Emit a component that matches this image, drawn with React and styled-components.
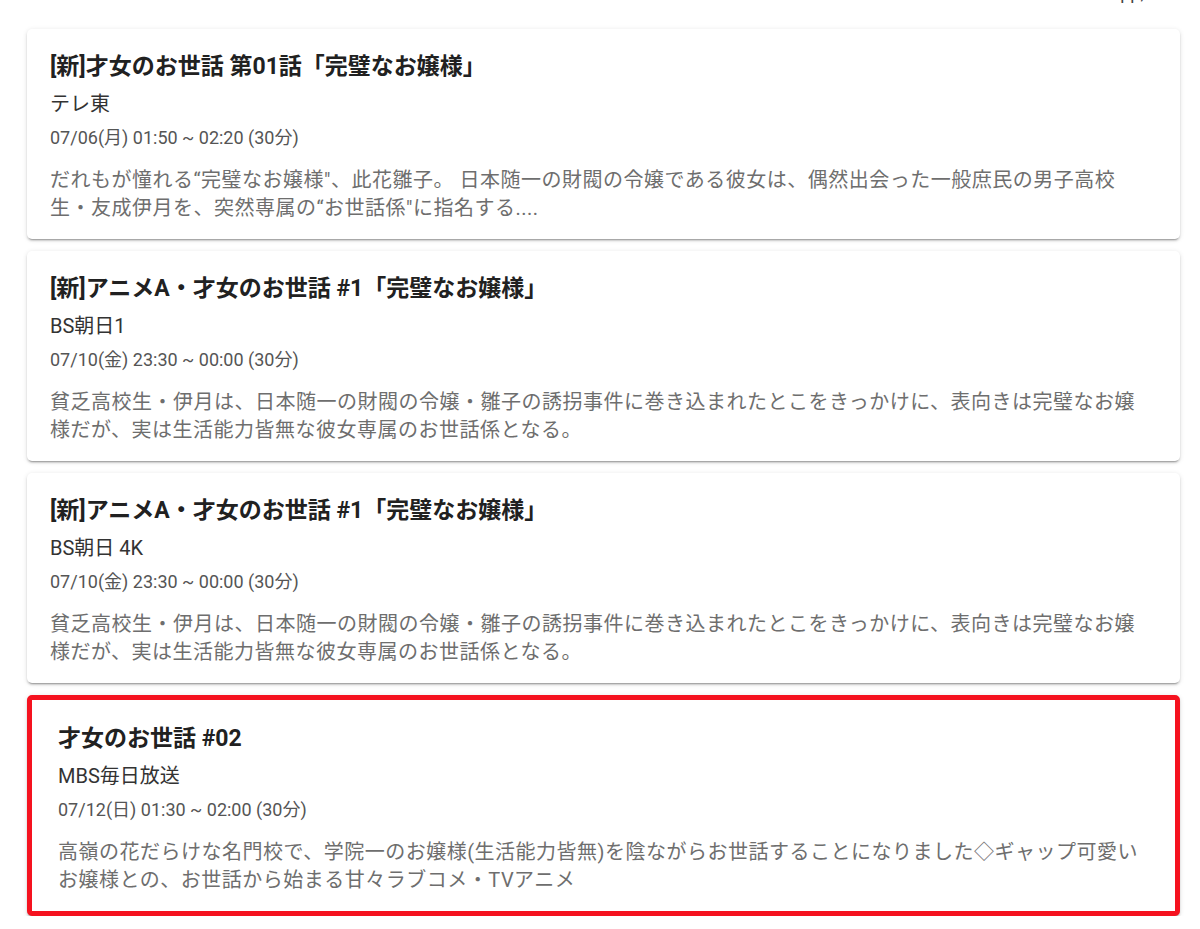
import React from 'react'
import styled, { createGlobalStyle } from 'styled-components'

const GlobalStyle = createGlobalStyle`
  html, body {
    margin: 0;
    background: #ffffff;
    font-family: Roboto, "Noto Sans CJK JP", sans-serif;
    overflow: hidden;
  }
`;

const programs = [
  {
    id: 1,
    title: '[新]才女のお世話 第01話「完璧なお嬢様」',
    station: 'テレ東',
    time: '07/06(月) 01:50 ~ 02:20 (30分)',
    desc: 'だれもが憧れる“完璧なお嬢様"、此花雛子。 日本随一の財閥の令嬢である彼女は、偶然出会った一般庶民の男子高校生・友成伊月を、突然専属の“お世話係"に指名する....',
  },
  {
    id: 2,
    title: '[新]アニメA・才女のお世話 #1「完璧なお嬢様」',
    station: 'BS朝日1',
    time: '07/10(金) 23:30 ~ 00:00 (30分)',
    desc: '貧乏高校生・伊月は、日本随一の財閥の令嬢・雛子の誘拐事件に巻き込まれたとこをきっかけに、表向きは完璧なお嬢様だが、実は生活能力皆無な彼女専属のお世話係となる。',
  },
  {
    id: 3,
    title: '[新]アニメA・才女のお世話 #1「完璧なお嬢様」',
    station: 'BS朝日 4K',
    time: '07/10(金) 23:30 ~ 00:00 (30分)',
    desc: '貧乏高校生・伊月は、日本随一の財閥の令嬢・雛子の誘拐事件に巻き込まれたとこをきっかけに、表向きは完璧なお嬢様だが、実は生活能力皆無な彼女専属のお世話係となる。',
  },
  {
    id: 4,
    title: '才女のお世話 #02',
    station: 'MBS毎日放送',
    time: '07/12(日) 01:30 ~ 02:00 (30分)',
    desc: '高嶺の花だらけな名門校で、学院一のお嬢様(生活能力皆無)を陰ながらお世話することになりました◇ギャップ可愛いお嬢様との、お世話から始まる甘々ラブコメ・TVアニメ',
    selected: true,
  },
];

export default function App() {
  return (
    <>
      <GlobalStyle />
      <Page>
        <Toolbar>
          <ToolLink>app,</ToolLink>
        </Toolbar>
        <List>
          {programs.map((p) => (
            <Card key={p.id} $selected={p.selected}>
              <Title>{p.title}</Title>
              <Station>{p.station}</Station>
              <Time>{p.time}</Time>
              <Desc>{p.desc}</Desc>
            </Card>
          ))}
        </List>
      </Page>
    </>
  );
}

const Page = styled.div`
  margin: 0 20px 0 27px;
`;

const Toolbar = styled.div`
  display: flex;
  justify-content: flex-end;
  height: 22px;
  margin-top: -18px;
  margin-bottom: 25px;
  padding-right: 36px;
`;

const ToolLink = styled.span`
  font-size: 18px;
  line-height: 22px;
  color: #444;
`;

const List = styled.div`
  display: flex;
  flex-direction: column;
  gap: 12px;
`;

const Card = styled.div`
  background: #fff;
  border-radius: 5px;
  box-shadow: 0 3px 1px -2px rgba(0, 0, 0, 0.2), 0 2px 2px 0 rgba(0, 0, 0, 0.14),
    0 1px 5px 0 rgba(0, 0, 0, 0.12);
  padding: 21px 26px 17px 23px;
  ${({ $selected }) =>
    $selected &&
    `
    border: 5px solid #f5121f;
    padding: 22px 26px 17px 26px;
  `}
`;

const Title = styled.div`
  font-size: 23px;
  line-height: 34px;
  font-weight: 700;
  color: #212121;
`;

const Station = styled.div`
  margin-top: 6px;
  font-size: 20px;
  line-height: 28px;
  color: #333;
`;

const Time = styled.div`
  margin-top: 7px;
  font-size: 18px;
  line-height: 26px;
  color: #555;
`;

const Desc = styled.div`
  margin-top: 15px;
  font-size: 20px;
  line-height: 28px;
  letter-spacing: 0.5px;
  color: #6e6e6e;
`;
